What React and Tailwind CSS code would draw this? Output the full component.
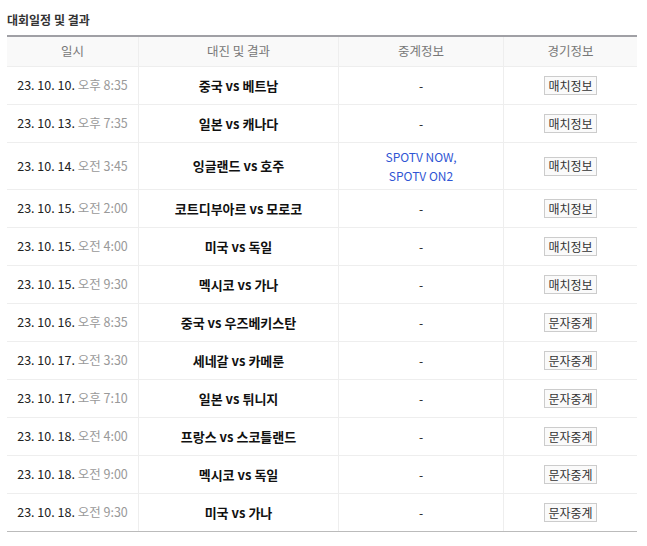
import React from "react";

const rows = [
  { date: "23. 10. 10.", time: "오후 8:35", match: "중국 vs 베트남", tv: null, btn: "매치정보" },
  { date: "23. 10. 13.", time: "오후 7:35", match: "일본 vs 캐나다", tv: null, btn: "매치정보" },
  { date: "23. 10. 14.", time: "오전 3:45", match: "잉글랜드 vs 호주", tv: ["SPOTV NOW,", "SPOTV ON2"], btn: "매치정보" },
  { date: "23. 10. 15.", time: "오전 2:00", match: "코트디부아르 vs 모로코", tv: null, btn: "매치정보" },
  { date: "23. 10. 15.", time: "오전 4:00", match: "미국 vs 독일", tv: null, btn: "매치정보" },
  { date: "23. 10. 15.", time: "오전 9:30", match: "멕시코 vs 가나", tv: null, btn: "매치정보" },
  { date: "23. 10. 16.", time: "오후 8:35", match: "중국 vs 우즈베키스탄", tv: null, btn: "문자중계" },
  { date: "23. 10. 17.", time: "오전 3:30", match: "세네갈 vs 카메룬", tv: null, btn: "문자중계" },
  { date: "23. 10. 17.", time: "오후 7:10", match: "일본 vs 튀니지", tv: null, btn: "문자중계" },
  { date: "23. 10. 18.", time: "오전 4:00", match: "프랑스 vs 스코틀랜드", tv: null, btn: "문자중계" },
  { date: "23. 10. 18.", time: "오전 9:00", match: "멕시코 vs 독일", tv: null, btn: "문자중계" },
  { date: "23. 10. 18.", time: "오전 9:30", match: "미국 vs 가나", tv: null, btn: "문자중계" },
];

const grid = "grid grid-cols-[132px_200px_165px_133px]";

function Row({ r, last }) {
  const h = r.tv ? "h-[47px]" : "h-[38px]";
  const border = last ? "border-b border-[#bbbbbb]" : "border-b border-[#eeeeee]";
  return (
    <div className={`${grid} ${h} ${border} text-[12px]`}>
      <div className="flex items-center justify-center border-r border-[#eeeeee] text-[12.5px] text-[#222]">
        {r.date}&nbsp;<span className="text-[#999]">{r.time}</span>
      </div>
      <div className="flex items-center justify-center border-r border-[#eeeeee] text-[13px] font-bold text-[#111]">
        {r.match}
      </div>
      <div className="flex items-center justify-center border-r border-[#eeeeee] text-[#111]">
        {r.tv ? (
          <div className="text-center leading-[19px] text-[#2f55d4]">
            <div>{r.tv[0]}</div>
            <div>{r.tv[1]}</div>
          </div>
        ) : (
          "-"
        )}
      </div>
      <div className="flex items-center justify-center">
        <span className="flex h-[19px] w-[53px] items-center justify-center border border-[#cccccc] bg-[#fafafa] text-[12px] text-[#333]">
          {r.btn}
        </span>
      </div>
    </div>
  );
}

export default function App() {
  return (
    <div
      className="min-h-[546px] bg-white px-[7px] pt-[11px]"
      style={{ fontFamily: '"Noto Sans CJK KR", "Noto Sans", sans-serif' }}
    >
      <h2 className="h-[24px] text-[12px] font-bold leading-[18px] text-[#333]">대회일정 및 결과</h2>
      <div className="w-[630px] border-t-2 border-[#a0a0a5]">
        <div className={`${grid} h-[30px] border-b border-[#eeeeee] bg-[#f9f9f9] text-[12.5px] text-[#777]`}>
          <div className="flex items-center justify-center border-r border-[#eeeeee]">일시</div>
          <div className="flex items-center justify-center border-r border-[#eeeeee]">대진 및 결과</div>
          <div className="flex items-center justify-center border-r border-[#eeeeee]">중계정보</div>
          <div className="flex items-center justify-center">경기정보</div>
        </div>
        {rows.map((r, i) => (
          <Row key={i} r={r} last={i === rows.length - 1} />
        ))}
      </div>
    </div>
  );
}
